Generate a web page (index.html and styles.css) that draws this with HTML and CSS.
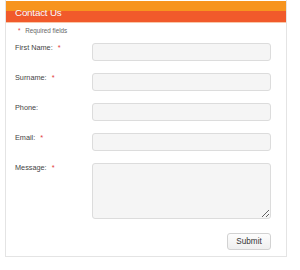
FILE: index.html
```html
<!DOCTYPE html>
<html lang="en">
<head>
  <meta charset="UTF-8" />
  <title>Contact Us</title>
  <link rel="stylesheet" href="styles.css">
</head>
<body>

  <!-- ───── contact card ───── -->
  <div class="card">
    <div class="card-head">Contact Us</div>

    <p class="required-note"><span class="req">*</span> Required fields</p>

    <form class="contact-form" onsubmit="return false">
      <label for="firstName">First Name:<span class="req">*</span></label>
      <input type="text" id="firstName" />

      <label for="surname">Surname:<span class="req">*</span></label>
      <input type="text" id="surname" />

      <label for="phone">Phone:</label>
      <input type="text" id="phone" />

      <label for="email">Email:<span class="req">*</span></label>
      <input type="text" id="email" />

      <label for="message">Message:<span class="req">*</span></label>
      <textarea id="message"></textarea>

      <div class="actions">
        <button type="submit">Submit</button>
      </div>
    </form>
  </div>

</body>
</html>
```

FILE: styles.css
```css
:root {
  --c-orange:   #f7941e;
  --c-red:      #f15a2b;
  --c-peach:    #f9c7a8;
  --c-text:     #444444;
  --c-muted:    #666666;
  --c-req:      #e2363a;
  --c-border:   #e4e4e4;
  --c-field:    #dcdcdc;
  --bg-field:   #f5f5f5;

  --font-base: "Liberation Sans", Arial, sans-serif;
}

/* ───── base ───── */
body {
  margin: 0;
  padding: 0 0 0 5px;
  font-family: var(--font-base);
  background: #ffffff;
}

.card {
  width: 282px;
  box-sizing: border-box;
  border: 1px solid var(--c-border);
  border-top: none;
  padding: 0 15px 6px 9px;
}

/* ───── header strip ───── */
.card-head {
  margin: 0 -15px 0 -9px;
  padding: 2px 9px 0;
  height: 20px;
  line-height: 21px;
  color: #ffffff;
  font-size: 9.8px;
  letter-spacing: -0.2px;
  background: linear-gradient(#ffffff 0 1px, var(--c-orange) 1px 11px, var(--c-red) 11px);
  border-bottom: 1px solid var(--c-peach);
  text-shadow: 0 0 1px rgba(160, 40, 0, 0.25);
}

.required-note {
  margin: 3px 0 8px;
  padding-left: 3px;
  line-height: 9px;
  font-size: 6.3px;
  color: var(--c-muted);
}

.req {
  color: var(--c-req);
  margin-left: 5px;
}
.required-note .req { margin: 0 3px 0 0; }

/* ───── form grid ───── */
.contact-form {
  display: grid;
  grid-template-columns: 77px 179px;
  row-gap: 12px;
}

label {
  font-size: 7.3px;
  line-height: 9px;
  color: var(--c-text);
}

input,
textarea {
  box-sizing: border-box;
  width: 179px;
  height: 18px;
  margin: 0;
  border: 1px solid var(--c-field);
  border-radius: 3px;
  background: var(--bg-field);
  font-family: var(--font-base);
  font-size: 8px;
}
textarea { height: 56px; }

/* ───── submit ───── */
.actions {
  grid-column: 1 / -1;
  display: flex;
  justify-content: flex-end;
  margin-top: 2px;
}

button {
  width: 44px;
  height: 17px;
  padding: 0;
  border: 1px solid #d2d2d2;
  border-radius: 3px;
  background: linear-gradient(#fdfdfd, #efefef);
  color: #333333;
  font-family: var(--font-base);
  font-size: 8.2px;
  cursor: pointer;
}
```
